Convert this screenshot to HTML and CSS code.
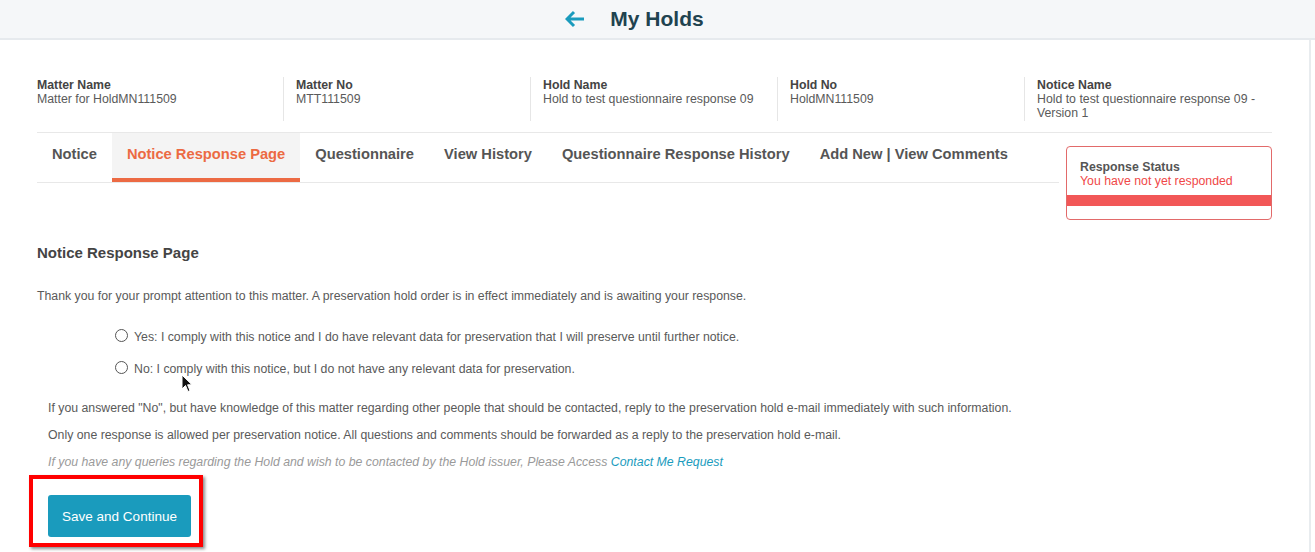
FILE: index.html
```html
<!DOCTYPE html>
<html lang="en">
<head>
    <meta charset="UTF-8">
    <meta name="viewport" content="width=device-width, initial-scale=1.0">
    <title>My Holds</title>
    <link rel="stylesheet" href="styles.css">
</head>
<body>

<header class="topbar">
    <svg class="back-arrow" width="20" height="18" viewBox="0 0 20 18">
        <path d="M9 2 L2 9 L9 16 M2 9 H19" fill="none" stroke="#1a9bbd" stroke-width="3"/>
    </svg>
    <h1>My Holds</h1>
</header>

<main class="page">
    <section class="info-row">
        <div class="info-cell">
            <div class="info-label">Matter Name</div>
            <div class="info-value">Matter for HoldMN111509</div>
        </div>
        <div class="info-cell">
            <div class="info-label">Matter No</div>
            <div class="info-value">MTT111509</div>
        </div>
        <div class="info-cell">
            <div class="info-label">Hold Name</div>
            <div class="info-value">Hold to test questionnaire response 09</div>
        </div>
        <div class="info-cell">
            <div class="info-label">Hold No</div>
            <div class="info-value">HoldMN111509</div>
        </div>
        <div class="info-cell">
            <div class="info-label">Notice Name</div>
            <div class="info-value">Hold to test questionnaire response 09 - Version 1</div>
        </div>
    </section>

    <div class="tab-row">
        <nav class="tabs">
            <a class="tab">Notice</a>
            <a class="tab active">Notice Response Page</a>
            <a class="tab">Questionnaire</a>
            <a class="tab">View History</a>
            <a class="tab">Questionnaire Response History</a>
            <a class="tab">Add New | View Comments</a>
        </nav>
        <div class="status-card">
            <div class="status-title">Response Status</div>
            <div class="status-text">You have not yet responded</div>
            <div class="status-band"></div>
        </div>
    </div>

    <section class="response">
        <h2>Notice Response Page</h2>
        <p class="intro">Thank you for your prompt attention to this matter. A preservation hold order is in effect immediately and is awaiting your response.</p>

        <div class="options">
            <label class="option"><span class="radio"></span>Yes: I comply with this notice and I do have relevant data for preservation that I will preserve until further notice.</label>
            <label class="option"><span class="radio"></span>No: I comply with this notice, but I do not have any relevant data for preservation.</label>
        </div>

        <p class="note">If you answered "No", but have knowledge of this matter regarding other people that should be contacted, reply to the preservation hold e-mail immediately with such information.</p>
        <p class="note">Only one response is allowed per preservation notice. All questions and comments should be forwarded as a reply to the preservation hold e-mail.</p>
        <p class="note hint">If you have any queries regarding the Hold and wish to be contacted by the Hold issuer, Please Access <a class="link">Contact Me Request</a></p>

        <div class="highlight">
            <button class="save-button">Save and Continue</button>
        </div>
    </section>

    <svg class="cursor" width="12" height="19" viewBox="0 0 12 19">
        <path d="M1 1 L1 15 L4.5 11.5 L7 17.5 L9 16.6 L6.6 10.8 L11 10.8 Z" fill="#111" stroke="#fff" stroke-width="1"/>
    </svg>
</main>

</body>
</html>
```

FILE: styles.css
```css
body {
    margin: 0;
    font-family: "Liberation Sans", Arial, sans-serif;
    color: #5a5a5a;
    background-color: #fff;
}

/* верхняя полоса */
.topbar {
    height: 38px;
    display: flex;
    align-items: center;
    justify-content: center;
    background-color: #f5f7f9;
    border-bottom: 2px solid #e6eaee;
    padding-right: 46px;
}
.back-arrow {
    margin-right: 25px;
}
.topbar h1 {
    margin: 0;
    font-size: 21px;
    font-weight: bold;
    color: #1f4350;
}

.page {
    position: relative;
    width: 1311px;
    border-right: 2px solid #e8ecef;
    padding: 37px 37px 0 37px;
    box-sizing: border-box;
    min-height: 512px;
}

/* шапка с данными дела */
.info-row {
    display: grid;
    grid-template-columns: repeat(5, 1fr);
    border-bottom: 1px solid #e8e8e8;
    padding-bottom: 11px;
}
.info-cell {
    height: 44px;
    padding-left: 12px;
    padding-right: 10px;
    border-right: 1px solid #e6e6e6;
    font-size: 12.3px;
    line-height: 14px;
}
.info-cell:first-child {
    padding-left: 0;
}
.info-cell:last-child {
    border-right: none;
}
.info-label {
    font-weight: bold;
    color: #444;
    margin-top: 1px;
}
.info-value {
    color: #5a5a5a;
}

/* вкладки */
.tab-row {
    display: flex;
    align-items: flex-start;
}
.tabs {
    flex: 1;
    display: flex;
    height: 49px;
    border-bottom: 1px solid #e8e8e8;
    margin-right: 7px;
}
.tab {
    padding: 13px 15px 0 15px;
    font-size: 14.7px;
    font-weight: bold;
    color: #555;
    cursor: pointer;
}
.tab.active {
    color: #ec6a43;
    background-color: #f4f4f4;
    border-bottom: 4px solid #ec6a43;
    height: 32px;
}

.status-card {
    width: 206px;
    margin-top: 13px;
    border: 1px solid #e26a6a;
    border-radius: 4px;
    box-sizing: border-box;
    padding-top: 13px;
    padding-bottom: 13px;
    font-size: 12.3px;
    line-height: 14px;
}
.status-title {
    font-weight: bold;
    color: #555;
    padding-left: 13px;
}
.status-text {
    color: #f04848;
    padding-left: 13px;
}
.status-band {
    height: 11px;
    margin-top: 7px;
    background-color: #f25757;
}

/* основной блок ответа */
.response h2 {
    margin: 24px 0 0 0;
    font-size: 15px;
    font-weight: bold;
    color: #444;
}
.intro {
    margin: 28px 0 0 0;
    font-size: 12.3px;
}
.options {
    margin: 18px 0 0 78px;
}
.option {
    display: flex;
    align-items: center;
    font-size: 12.3px;
    height: 32px;
}
.radio {
    width: 11px;
    height: 11px;
    border: 1px solid #555;
    border-radius: 50%;
    margin-right: 6px;
    margin-top: -4px;
}
.note {
    margin: 0 0 0 11px;
    font-size: 12.3px;
    line-height: 27px;
}
.options + .note {
    margin-top: 10px;
}
.hint {
    color: #9a9a9a;
    font-style: italic;
}
.link {
    color: #1a9bbd;
    cursor: pointer;
}

.highlight {
    display: inline-block;
    margin: -1px 0 0 -8px;
    border: 4px solid #f00;
    padding: 16px 8px 6px 15px;
    box-shadow: 2px 2px 3px rgba(0, 0, 0, 0.45);
}
.save-button {
    display: block;
    width: 143px;
    height: 42px;
    background-color: #1a9bbd;
    color: #fff;
    border: none;
    border-radius: 3px;
    font-family: "Liberation Sans", Arial, sans-serif;
    font-size: 13.5px;
    cursor: pointer;
}

.cursor {
    position: absolute;
    left: 181px;
    top: 334px;
}
```
